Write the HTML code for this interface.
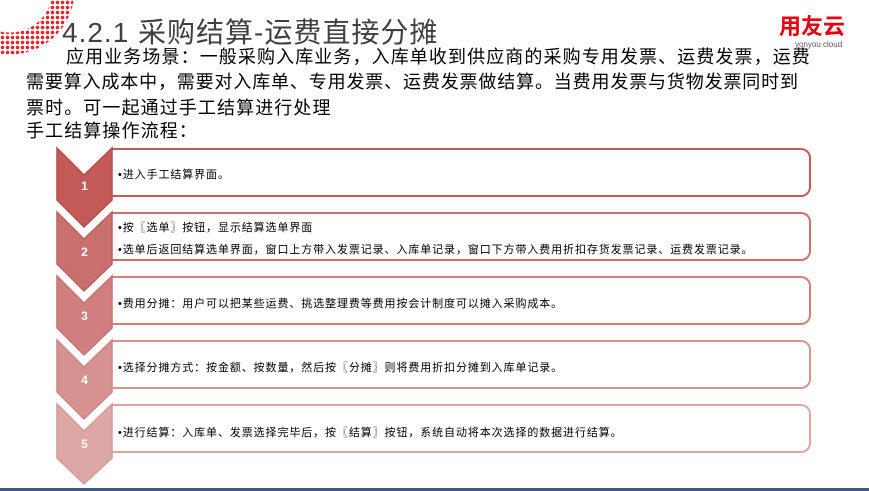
<!DOCTYPE html>
<html><head><meta charset="utf-8"><style>
body{margin:0;width:869px;height:491px;overflow:hidden;background:#fff;position:relative;font-family:"Liberation Sans","Noto Sans CJK SC",sans-serif}
.a{position:absolute;white-space:nowrap}
.dots{position:absolute;left:-55px;top:-75px;width:130px;height:130px;background:radial-gradient(circle,#e4252c 1.6px,transparent 2px) 0 0/5px 5px;-webkit-mask:radial-gradient(circle at 50% 50%,transparent 42px,#000 43px,#000 64px,transparent 65px);mask:radial-gradient(circle at 50% 50%,transparent 42px,#000 43px,#000 64px,transparent 65px)}
.t{font-size:18px;color:#000;line-height:24px;letter-spacing:1.1px}
.box{position:absolute;left:111px;width:700px;height:49px;border:2px solid;border-left:none;border-radius:0 10px 10px 0;background:#fff;box-sizing:border-box}
.bt{position:absolute;left:118px;font-size:11px;color:#000;letter-spacing:0.9px}
.n{position:absolute;left:57px;width:55px;text-align:center;color:#fff;font-weight:bold;font-size:12px}
</style></head><body>
<div class="dots"></div>
<div class="a" style="left:62px;top:11px;font-size:28px;color:#404040;letter-spacing:1px">4.2.1 采购结算-运费直接分摊</div>
<div class="a" style="left:779px;top:14px;font-size:22px;line-height:26px;font-weight:bold;color:#e60012;letter-spacing:0px">用友云</div>
<div class="a" style="left:795px;top:40px;font-size:8px;line-height:10px;color:#555">yonyou cloud</div>
<div class="a t" style="left:66px;top:45px">应用业务场景：一般采购入库业务，入库单收到供应商的采购专用发票、运费发票，运费</div>
<div class="a t" style="left:26px;top:70px;letter-spacing:0.85px">需要算入成本中，需要对入库单、专用发票、运费发票做结算。当费用发票与货物发票同时到</div>
<div class="a t" style="left:26px;top:96px">票时。可一起通过手工结算进行处理</div>
<div class="a t" style="left:26px;top:119px">手工结算操作流程：</div>

<div class="box" style="top:148px;border-color:#c55a58"></div>
<div class="box" style="top:212px;border-color:#cc6e6c"></div>
<div class="box" style="top:276px;border-color:#d07f7d"></div>
<div class="box" style="top:340px;border-color:#d69391"></div>
<div class="box" style="top:404px;border-color:#dca6a4"></div>

<svg class="a" style="left:0;top:0" width="869" height="491">
<g stroke-width="1.5">
<path d="M57,148 L84,175 L112,148 L112,200 L84,227 L57,200Z" fill="#c25a57" stroke="#b54d4a"/>
<path d="M57,212 L84,239 L112,212 L112,264 L84,291 L57,264Z" fill="#c96f6d" stroke="#bb6260"/>
<path d="M57,276 L84,303 L112,276 L112,328 L84,355 L57,328Z" fill="#cf7f7d" stroke="#c27270"/>
<path d="M57,340 L84,367 L112,340 L112,392 L84,419 L57,392Z" fill="#d69290" stroke="#ca8684"/>
<path d="M57,404 L84,431 L112,404 L112,458 L84,484 L57,458Z" fill="#dda7a5" stroke="#d29b99"/>
</g>
<rect x="0" y="488" width="869" height="3" fill="#3f5a7f"/>
</svg>
<div class="n" style="top:179px">1</div>
<div class="n" style="top:245px">2</div>
<div class="n" style="top:309px">3</div>
<div class="n" style="top:373px">4</div>
<div class="n" style="top:437px">5</div>

<div class="bt" style="top:166px">•进入手工结算界面。</div>
<div class="bt" style="top:219px">•按〖选单〗按钮，显示结算选单界面</div>
<div class="bt" style="top:241px">•选单后返回结算选单界面，窗口上方带入发票记录、入库单记录，窗口下方带入费用折扣存货发票记录、运费发票记录。</div>
<div class="bt" style="top:295px">•费用分摊：用户可以把某些运费、挑选整理费等费用按会计制度可以摊入采购成本。</div>
<div class="bt" style="top:359px">•选择分摊方式：按金额、按数量，然后按〖分摊〗则将费用折扣分摊到入库单记录。</div>
<div class="bt" style="top:424px">•进行结算：入库单、发票选择完毕后，按〖结算〗按钮，系统自动将本次选择的数据进行结算。</div>
</body></html>
